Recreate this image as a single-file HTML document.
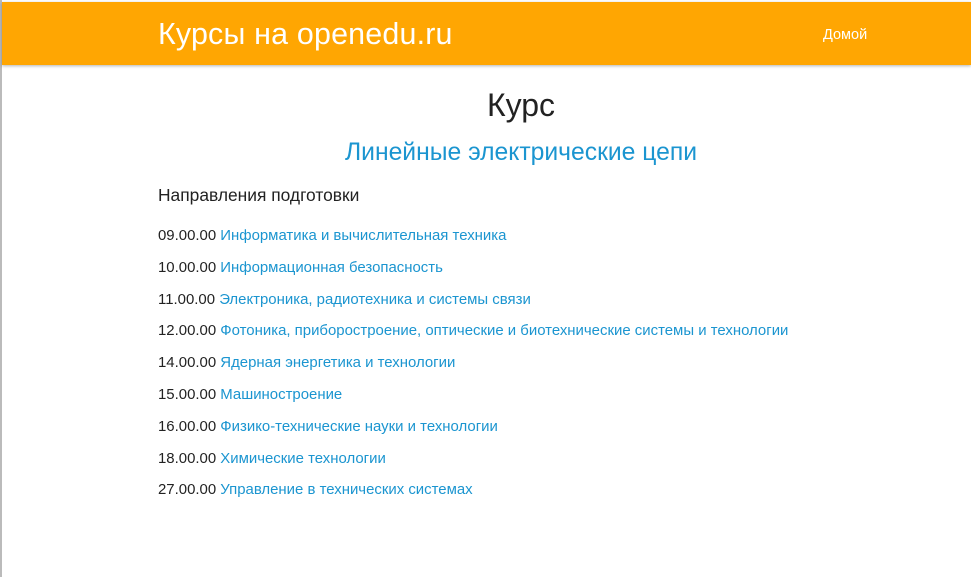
<!DOCTYPE html>
<html><head><meta charset="utf-8"><style>
body{margin:0;width:971px;height:577px;background:#fff;font-family:"Liberation Sans",sans-serif;position:relative;overflow:hidden;color:#222}
.lb{position:absolute;left:0;top:0;width:2px;height:577px;background:#bbb}
.hdr{position:absolute;left:2px;top:2px;right:0;height:63px;background:#FFA602;box-shadow:0 1px 3px rgba(0,0,0,.3)}
.hdr .t{position:absolute;left:156px;top:15px;font-size:30.4px;color:#fff;letter-spacing:0.2px}
.hdr .h{position:absolute;left:821px;top:25px;font-size:14.5px;color:#fff}
h1{position:absolute;top:87px;left:0;width:1042px;text-align:center;margin:0;font-weight:normal;font-size:32px;color:#222}
h2{position:absolute;top:139px;left:0;width:1042px;text-align:center;margin:0;font-weight:normal;font-size:24.7px;color:#1b95d0}
h3{position:absolute;top:185px;left:158px;margin:0;font-weight:normal;font-size:17.4px}
.r{position:absolute;left:158px;font-size:14.95px;color:#222}
.r span{color:#1b95d0}
</style></head><body>
<div class="lb"></div>
<div class="hdr"><div class="t">Курсы на openedu.ru</div><div class="h">Домой</div></div>
<h1>Курс</h1>
<h2>Линейные электрические цепи</h2>
<h3>Направления подготовки</h3>
<div class="r" style="top:227px">09.00.00 <span>Информатика и вычислительная техника</span></div>
<div class="r" style="top:259px">10.00.00 <span>Информационная безопасность</span></div>
<div class="r" style="top:291px">11.00.00 <span>Электроника, радиотехника и системы связи</span></div>
<div class="r" style="top:322px">12.00.00 <span>Фотоника, приборостроение, оптические и биотехнические системы и технологии</span></div>
<div class="r" style="top:354px">14.00.00 <span>Ядерная энергетика и технологии</span></div>
<div class="r" style="top:386px">15.00.00 <span>Машиностроение</span></div>
<div class="r" style="top:418px">16.00.00 <span>Физико-технические науки и технологии</span></div>
<div class="r" style="top:450px">18.00.00 <span>Химические технологии</span></div>
<div class="r" style="top:481px">27.00.00 <span>Управление в технических системах</span></div>
</body></html>
